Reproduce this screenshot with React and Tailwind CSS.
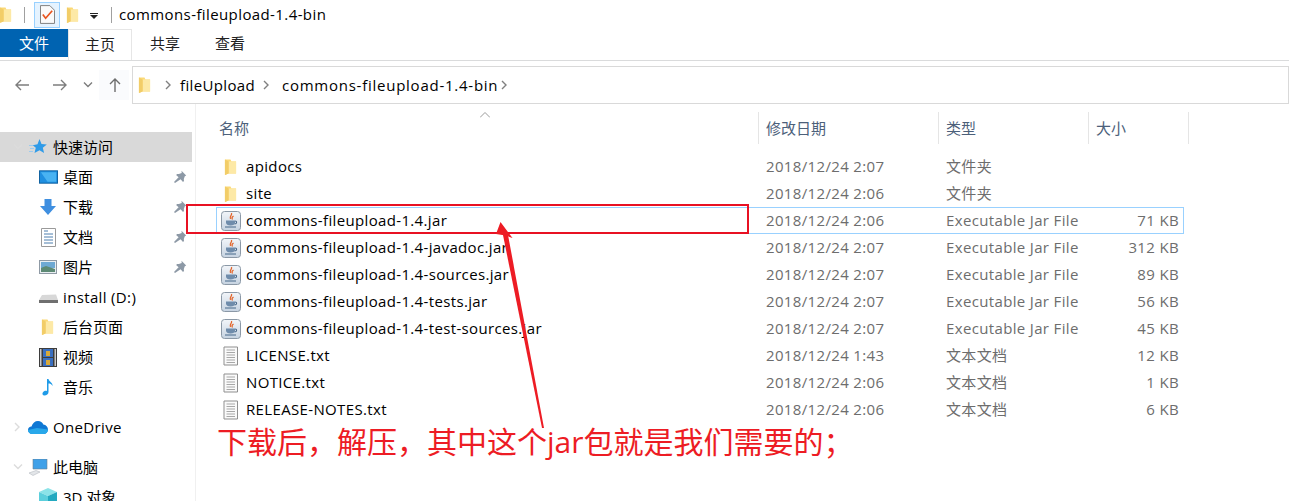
import React from "react"

const FONT = "font-['Open_Sans','Noto_Sans_CJK_SC',sans-serif]"

function Folder({ className = "w-4 h-[18px]" }) {
  return (
    <svg viewBox="0 0 14 18" className={className}>
      <path d="M1 1h6l1 2h5v13H5l-4 1.5z" fill="#fbd976" />
      <path d="M5 3h8v13H5z" fill="#fde9a6" />
      <path d="M1 1v16.5l4-1.5V3z" fill="#f2cd68" />
    </svg>
  )
}

function JavaIcon() {
  return (
    <svg viewBox="0 0 20 20" className="w-5 h-5 shrink-0">
      <defs>
        <linearGradient id="jv" x1="0" y1="0" x2="0" y2="1">
          <stop offset="0" stopColor="#f2f5f9" />
          <stop offset="1" stopColor="#c6d3e1" />
        </linearGradient>
      </defs>
      <rect x="0.5" y="0.5" width="19" height="19" rx="3" fill="url(#jv)" stroke="#8b98a6" />
      <path d="M10.500 2c1 2.500-2.500 3-1 6M12.500 5c-1.500 1-2 2-1 3.500" fill="none" stroke="#e2642a" strokeWidth="1.300" />
      <path d="M5 9.500h9v2c0 2-1.800 3-4.500 3S5 13.500 5 11.500z" fill="#6f8cab" />
      <path d="M14 10c2.200 0 2.200 3-.5 3M4 16h11" fill="none" stroke="#47688a" strokeWidth="1.100" />
    </svg>
  )
}

function TextIcon() {
  return (
    <svg viewBox="0 0 16 20" className="w-4 h-5 shrink-0 ml-[2px]">
      <path d="M1 1h13.500v18H1z" fill="#fafafa" stroke="#8f8f8f" />
      <path d="M3.500 4h8.500M3.500 6.500h8.500M3.500 9h8.500M3.500 11.500h8.500M3.500 14h8.500M3.500 16.500h8.500" stroke="#a8a8a8" />
    </svg>
  )
}

function Pin() {
  return (
    <svg viewBox="0 0 14 14" className="w-[14px] h-[14px]">
      <path d="M8.500 .8l4.700 4.700-1.400.8-1 2.800.2 1.800-1 1-2.400-2.600L2 13l-1-1 4.600-4.700-2.500-2.400 1-1 1.800.2 2.800-1z" fill="#8d99a6" />
    </svg>
  )
}

function Chev({ dir = "right", className = "" }) {
  const d = dir === "right" ? "M2 1l4 4-4 4" : "M1 2.500l4 4 4-4"
  return (
    <svg viewBox="0 0 10 10" className={`w-[10px] h-[10px] ${className}`}>
      <path d={d} fill="none" stroke="currentColor" strokeWidth="1.400" />
    </svg>
  )
}

const icons = {
  star: (
    <svg viewBox="0 0 18 18" className="w-[18px] h-[18px] -ml-[1px]">
      <path d="M10.500 1l2 5 5.300.4-4 3.400 1.300 5.200-4.600-2.800L5.500 15l1.300-5.200-3-2.600 4.700-1z" fill="#2f9be8" />
      <path d="M0 7.500h4M1 10.500h4M0 13.500h4" stroke="#9ccbee" />
    </svg>
  ),
  desktop: (
    <svg viewBox="0 0 20 14" className="w-[19px] h-[14px]">
      <rect x="0.500" y="0.500" width="19" height="13" fill="#1f8fe0" stroke="#0d5f9e" />
      <path d="M2 2h16v10H9z" fill="#49b3f2" />
    </svg>
  ),
  download: (
    <svg viewBox="0 0 18 18" className="w-[18px] h-[18px]">
      <path d="M5.500 1h7v7H17l-8 9-8-9h4.500z" fill="#3f8fe0" />
    </svg>
  ),
  doc: (
    <svg viewBox="0 0 15 19" className="w-[15px] h-[19px] ml-[2px]">
      <path d="M.5.5h14v18H.5z" fill="#fff" stroke="#9a9a9a" />
      <path d="M3 3h4M3 6h9M3 9h9M3 12h9M3 15h9" stroke="#4d7fae" />
    </svg>
  ),
  picture: (
    <svg viewBox="0 0 18 14" className="w-[18px] h-[14px]">
      <rect x="0.500" y="0.500" width="17" height="13" fill="#e9eef2" stroke="#8f9aa5" />
      <path d="M2 2h14v6H2z" fill="#6ea9d3" />
      <path d="M2 8l5-2 9 3v3H2z" fill="#5d8a74" />
    </svg>
  ),
  drive: (
    <svg viewBox="0 0 19 10" className="w-[19px] h-[10px] mt-[4px]">
      <path d="M3 1l14-.5L19 6H0z" fill="#d8d8d8" />
      <path d="M0 6h19v3H0z" fill="#6f6f6f" />
    </svg>
  ),
  folder: <Folder className="w-[13px] h-[18px] ml-[2px]" />,
  film: (
    <svg viewBox="0 0 18 19" className="w-[18px] h-[19px]">
      <rect width="18" height="19" fill="#3d3d3d" />
      <path d="M1 1h1.500v17H1zM15.500 1H17v17h-1.500z" fill="#c9c9c9" />
      <path d="M4 1h10v8H4z" fill="#3a6fc0" />
      <path d="M4 10h10v8H4z" fill="#3a6fc0" />
      <path d="M7 3h4v5H7zM7 12h4v5H7z" fill="#d8a93a" />
    </svg>
  ),
  music: (
    <svg viewBox="0 0 12 18" className="w-3 h-[18px] ml-[3px]">
      <path d="M5 1h1.500c.5 3 4.500 3.500 4 7-1-2-2.500-2.500-4-2.500V14c0 2-2 3.500-4 3.500S0 16 .8 14.500 3.500 12.500 5 13z" fill="#1f9be8" />
    </svg>
  ),
  cloud: (
    <svg viewBox="0 0 20 13" className="w-5 h-[13px] -ml-[2px]">
      <path d="M4.500 13C1.500 13 0 11 0 9c0-2 1.500-3.500 3.500-3.500C4.500 2 7 0 10 0c2.500 0 4.500 1.500 5.300 3.500C18 3.800 20 6 20 8.500 20 11 18 13 15.500 13z" fill="#0f78d4" />
      <path d="M4.500 13C1.500 13 0 11 0 9l9-2 11 1.500C20 11 18 13 15.500 13z" fill="#28a8ea" />
    </svg>
  ),
  pc: (
    <svg viewBox="0 0 20 17" className="w-5 h-[17px] -ml-[2px]">
      <path d="M5 0h14v10H5z" fill="#3fa0e8" stroke="#6d7f90" strokeWidth="0.600" />
      <path d="M1 14l7-2.500 4 1.500-7 3.500z" fill="#e3e6e9" stroke="#b5bbc1" strokeWidth="0.600" />
    </svg>
  ),
  cube: (
    <svg viewBox="0 0 18 19" className="w-[18px] h-[19px]">
      <path d="M9 0l9 4-9 4-9-4z" fill="#8be3e8" />
      <path d="M0 4l9 4v11l-9-4z" fill="#5ccfdc" />
      <path d="M18 4L9 8v11l9-4z" fill="#23a9c0" />
    </svg>
  ),
}

function SideTop({ icon, label, chevron, active, latin }) {
  return (
    <div className={`h-[30px] flex items-center ${active ? "bg-[#d9d9d9]" : ""}`}>
      <span className="w-[30px] flex justify-center pl-[5px] text-[#dcdcdc]">
        {chevron && <Chev dir={chevron} />}
      </span>
      <span className="w-[23px] flex items-center">{icon}</span>
      <span className={`text-[15px] text-black ${latin ? "tracking-[0.35px]" : ""}`}>{label}</span>
    </div>
  )
}

function SideItem({ icon, label, pinned, latin }) {
  return (
    <div className="h-[30px] flex items-center pl-[39px] pr-[5px]">
      <span className="w-[24px] flex items-center">{icon}</span>
      <span className={`text-[15px] text-black flex-1 ${latin ? "tracking-[0.35px]" : ""}`}>{label}</span>
      {pinned && <Pin />}
    </div>
  )
}

const files = [
  { name: "apidocs", date: "2018/12/24 2:07", type: "文件夹", size: "", kind: "dir" },
  { name: "site", date: "2018/12/24 2:06", type: "文件夹", size: "", kind: "dir" },
  { name: "commons-fileupload-1.4.jar", date: "2018/12/24 2:06", type: "Executable Jar File", size: "71 KB", kind: "jar", selected: true },
  { name: "commons-fileupload-1.4-javadoc.jar", date: "2018/12/24 2:07", type: "Executable Jar File", size: "312 KB", kind: "jar" },
  { name: "commons-fileupload-1.4-sources.jar", date: "2018/12/24 2:07", type: "Executable Jar File", size: "89 KB", kind: "jar" },
  { name: "commons-fileupload-1.4-tests.jar", date: "2018/12/24 2:07", type: "Executable Jar File", size: "56 KB", kind: "jar" },
  { name: "commons-fileupload-1.4-test-sources.jar", date: "2018/12/24 2:07", type: "Executable Jar File", size: "45 KB", kind: "jar" },
  { name: "LICENSE.txt", date: "2018/12/24 1:43", type: "文本文档", size: "12 KB", kind: "txt" },
  { name: "NOTICE.txt", date: "2018/12/24 2:06", type: "文本文档", size: "1 KB", kind: "txt" },
  { name: "RELEASE-NOTES.txt", date: "2018/12/24 2:06", type: "文本文档", size: "6 KB", kind: "txt" },
]

function FileRow({ file }) {
  return (
    <div className={`h-[27px] w-[968px] grid grid-cols-[549px_180px_150px_83px] items-center border ${file.selected ? "border-[#99d1ff]" : "border-transparent"}`}>
      <div className="flex items-center pl-[4px]">
        <span className="w-[25px] flex">
          {file.kind === "jar" && <JavaIcon />}
          {file.kind === "txt" && <TextIcon />}
          {file.kind === "dir" && <Folder className="w-[13px] h-[18px] ml-[3px]" />}
        </span>
        <span className="text-[15px] tracking-[0.35px] text-black whitespace-nowrap">{file.name}</span>
      </div>
      <span className="text-[15px] tracking-[0.35px] text-[#6d6d6d]">{file.date}</span>
      <span className="text-[15px] tracking-[0.35px] text-[#6d6d6d]">{file.type}</span>
      <span className="text-[15px] tracking-[0.35px] text-[#6d6d6d] text-right">{file.size}</span>
    </div>
  )
}

function HeaderCell({ label, className }) {
  return (
    <div className={`h-8 flex items-center pl-[7px] border-r border-[#e5e5e5] text-[15px] text-[#4c607a] ${className}`}>
      {label}
    </div>
  )
}

export default function App() {
  return (
    <div className={`relative w-[1289px] h-[501px] overflow-hidden bg-white ${FONT}`}>
      {/* title bar */}
      <div className="h-[29px] flex items-center">
        <Folder className="w-[13px] h-[18px] -ml-px" />
        <div className="w-px h-[16px] bg-[#a0a0a0] ml-[12px]" />
        <div className="w-[26px] h-[26px] ml-[9px] flex items-center justify-center bg-[#e5f3ff] border border-[#99d1ff]">
          <svg viewBox="0 0 16 20" className="w-[15px] h-[19px]">
            <path d="M.5.5h10l5 5v14H.5z" fill="#fafafa" stroke="#7a7a7a" />
            <path d="M3 10l3 4 7-8" fill="none" stroke="#e8541e" strokeWidth="1.800" />
          </svg>
        </div>
        <Folder className="w-[13px] h-[18px] ml-[6px]" />
        <svg viewBox="0 0 8 6" className="w-2 h-[6px] ml-[11px] mt-[2px]">
          <path d="M0 0h8v1H0zM0 2h8L4 6z" fill="#222" />
        </svg>
        <div className="w-px h-[16px] bg-[#a0a0a0] ml-[13px]" />
        <span className="ml-[7px] text-[15px] tracking-[0.4px] text-black">commons-fileupload-1.4-bin</span>
      </div>

      {/* ribbon tabs */}
      <div className="h-[32px] flex border-b border-[#dadbdc]">
        <div className="w-[68px] h-[28px] bg-[#0063b1] text-white text-[15px] flex items-center justify-center">文件</div>
        <div className="w-[64px] h-[31px] bg-white border-x border-t border-[#e6e6e6] text-[15px] text-[#222] flex items-center justify-center pb-[2px]">主页</div>
        <div className="w-[65px] text-[15px] text-[#222] flex items-center justify-center pb-[2px] pl-px">共享</div>
        <div className="w-[65px] text-[15px] text-[#222] flex items-center justify-center pb-[2px] pl-px">查看</div>
      </div>

      {/* nav + address */}
      <div className="h-[43px] flex items-end">
        <div className="w-[132px] h-[38px] flex items-center text-[#7d7d7d]">
          <svg viewBox="0 0 16 14" className="w-4 h-[14px] ml-[14px]">
            <path d="M15 7H2M7 2L2 7l5 5" fill="none" stroke="currentColor" strokeWidth="1.400" />
          </svg>
          <svg viewBox="0 0 16 14" className="w-4 h-[14px] ml-[22px]">
            <path d="M1 7h13M9 2l5 5-5 5" fill="none" stroke="currentColor" strokeWidth="1.400" />
          </svg>
          <Chev dir="down" className="ml-[15px]" />
          <div className="w-[30px] h-[30px] ml-[6px] flex items-center justify-center bg-[#fafbfd] pl-[2px]">
            <svg viewBox="0 0 14 16" className="w-[14px] h-4">
              <path d="M7 15V2M2 7l5-5 5 5" fill="none" stroke="#6d6d6d" strokeWidth="1.400" />
            </svg>
          </div>
        </div>
        <div className="flex-1 h-[38px] border border-[#d9d9d9] flex items-center text-[15px] text-black">
          <Folder className="w-[13px] h-[18px] ml-[5px]" />
          <Chev className="ml-[13px] text-[#808080]" />
          <span className="ml-[6px] tracking-[0.35px]">fileUpload</span>
          <Chev className="ml-[7px] text-[#808080]" />
          <span className="ml-[10px] tracking-[0.75px]">commons-fileupload-1.4-bin</span>
          <Chev className="ml-[2px] text-[#808080]" />
        </div>
      </div>

      <div className="flex">
        {/* sidebar */}
        <div className="w-[196px] h-[397px] shrink-0 pt-[28px] pr-[3px] border-r border-[#f0f0f0]">
          <SideTop icon={icons.star} label="快速访问" chevron="down" active />
          <SideItem icon={icons.desktop} label="桌面" pinned />
          <SideItem icon={icons.download} label="下载" pinned />
          <SideItem icon={icons.doc} label="文档" pinned />
          <SideItem icon={icons.picture} label="图片" pinned />
          <SideItem icon={icons.drive} label="install (D:)" latin />
          <SideItem icon={icons.folder} label="后台页面" />
          <SideItem icon={icons.film} label="视频" />
          <SideItem icon={icons.music} label="音乐" />
          <div className="h-[10px]" />
          <SideTop icon={icons.cloud} label="OneDrive" chevron="right" latin />
          <div className="h-[10px]" />
          <SideTop icon={icons.pc} label="此电脑" chevron="down" />
          <SideItem icon={icons.cube} label="3D 对象" />
        </div>

        {/* file list */}
        <div className="flex-1">
          <div className="relative flex pt-2">
            <svg viewBox="0 0 10 6" className="absolute left-[284px] top-[8px] w-[10px] h-[6px]">
              <path d="M0 5.500l5-5 5 5" fill="none" stroke="#9a9a9a" />
            </svg>
            <HeaderCell label="名称" className="w-[563px] pl-[23px]" />
            <HeaderCell label="修改日期" className="w-[180px]" />
            <HeaderCell label="类型" className="w-[150px]" />
            <HeaderCell label="大小" className="w-[100px]" />
          </div>
          <div className="pl-[20px] pt-[9px]">
            {files.map((f) => (
              <FileRow key={f.name} file={f} />
            ))}
          </div>
        </div>
      </div>

      {/* red annotation drawn over the window */}
      <div className="absolute left-[186px] top-[204px] w-[563px] h-[30px] border-2 border-[#e81123]" />
      <svg viewBox="0 0 1289 501" className="absolute left-0 top-0 w-[1289px] h-[501px]">
        <path d="M503 235L508 235L544 428L542 428z" fill="#ed1c24" />
        <path d="M500.500 222L512.500 238L505.500 235.500L496 234z" fill="#ed1c24" />
      </svg>
      <div className="absolute left-[217px] top-[419px] text-[30px] leading-[46px] text-[#ed1c24] whitespace-nowrap">
        下载后，解压，其中这个jar包就是我们需要的；
      </div>
    </div>
  )
}
